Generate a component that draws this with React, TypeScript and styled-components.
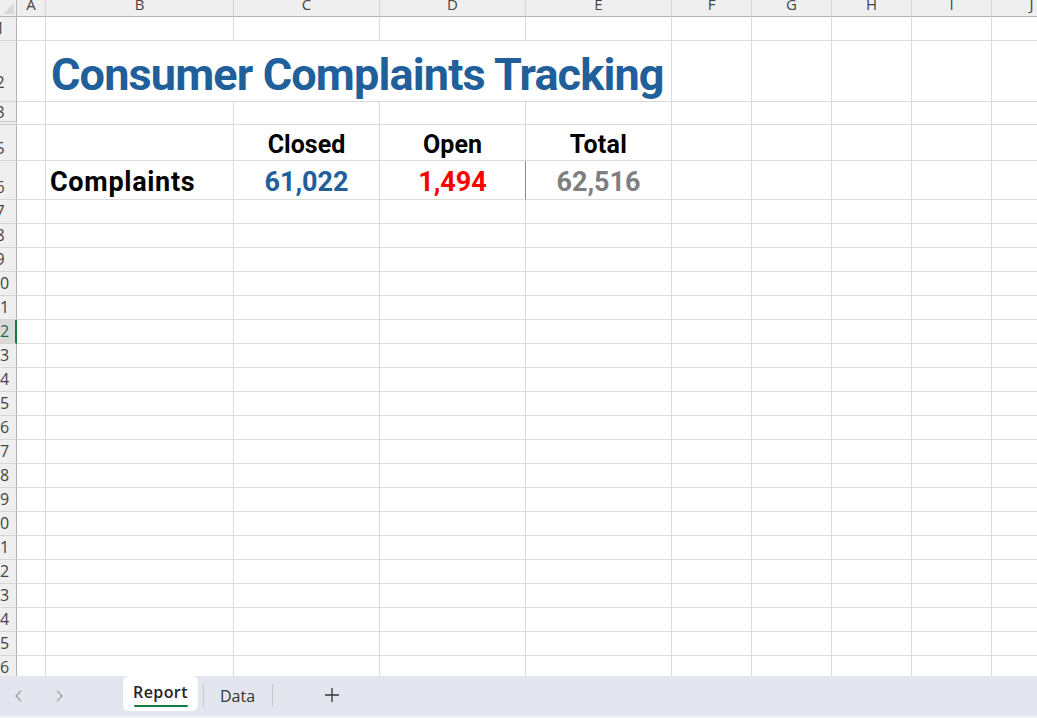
import React from "react";
import styled, { createGlobalStyle, css } from "styled-components";

const GlobalStyle = createGlobalStyle`
  html, body { margin: 0; padding: 0; background: #ffffff; overflow: hidden; }
  body { width: 1037px; height: 718px; font-family: "Open Sans", "Noto Sans", sans-serif; }
  #root { width: 100%; height: 100%; }
  * { box-sizing: border-box; }
`;

type Col = { key: string; w: number };
const COLS: Col[] = [
  { key: "A", w: 29 },
  { key: "B", w: 188 },
  { key: "C", w: 146 },
  { key: "D", w: 146 },
  { key: "E", w: 146 },
  { key: "F", w: 80 },
  { key: "G", w: 80 },
  { key: "H", w: 80 },
  { key: "I", w: 80 },
  { key: "J", w: 80 },
];

type CellDef = {
  text: string;
  color: string;
  size: number;
  align: "left" | "center";
  span?: number;
  pl?: number;
  pb?: number;
  spacing?: number;
};

type RowDef = {
  n: number;
  h: number;
  cells?: Record<string, CellDef>;
  darkRight?: string;
  hiddenAfter?: boolean;
  labelLift?: number;
};

const BLUE = "#215f9a";

const ROWS: RowDef[] = [
  { n: 1, h: 24 },
  {
    n: 2,
    h: 61,
    labelLift: 7,
    cells: {
      B: {
        text: "Consumer Complaints Tracking",
        color: BLUE,
        size: 45,
        align: "left",
        span: 4,
        pl: 5,
        pb: 0,
        spacing: -0.85,
      },
    },
  },
  { n: 3, h: 23, hiddenAfter: true, labelLift: -3 },
  {
    n: 5,
    h: 36,
    cells: {
      C: { text: "Closed", color: "#000000", size: 25, align: "center" },
      D: { text: "Open", color: "#000000", size: 25, align: "center" },
      E: { text: "Total", color: "#000000", size: 25, align: "center", spacing: 0.3 },
    },
  },
  {
    n: 6,
    h: 39,
    darkRight: "D",
    cells: {
      B: { text: "Complaints", color: "#000000", size: 27, align: "left", spacing: 0.7 },
      C: { text: "61,022", color: BLUE, size: 27, align: "center" },
      D: { text: "1,494", color: "#ff0000", size: 27, align: "center" },
      E: { text: "62,516", color: "#7f7f7f", size: 27, align: "center" },
    },
  },
  { n: 7, h: 24 },
  ...Array.from({ length: 19 }, (_, i) => ({ n: 8 + i, h: 24 })),
];

const SELECTED_ROW = 12;

const Page = styled.div`
  width: 100%;
  height: 100%;
  display: flex;
  flex-direction: column;
`;

const Sheet = styled.div<{ $cols: string; $rows: string }>`
  flex: 1 1 auto;
  min-height: 0;
  overflow: hidden;
  display: grid;
  grid-template-columns: ${(p) => p.$cols};
  grid-template-rows: ${(p) => p.$rows};
  align-content: start;
  justify-content: start;
  background: #ffffff;
`;

const Corner = styled.div`
  background: #efefef;
  border-right: 1px solid #b4b4b4;
  border-bottom: 1px solid #b4b4b4;
  display: flex;
  align-items: flex-end;
  justify-content: flex-end;
  padding: 0 2px 2px 0;
`;

const ColHead = styled.div`
  background: #efefef;
  border-right: 1px solid #d6d6d6;
  border-bottom: 1px solid #b4b4b4;
  display: flex;
  justify-content: center;
  align-items: flex-start;
  overflow: hidden;
  font-family: "Open Sans", sans-serif;
  font-size: 15px;
  font-weight: 400;
  color: #444444;
`;

const ColLabel = styled.span`
  line-height: 15px;
  margin-top: -3px;
`;

const RowHead = styled.div<{ $selected?: boolean; $hiddenAfter?: boolean }>`
  background: ${(p) => (p.$selected ? "#dadada" : "#efefef")};
  border-right: ${(p) => (p.$selected ? "2px solid #107c41" : "1px solid #b4b4b4")};
  border-bottom: ${(p) => (p.$hiddenAfter ? "4px double #c8c8c8" : "1px solid #d6d6d6")};
  display: flex;
  align-items: flex-end;
  justify-content: flex-start;
  overflow: hidden;
  padding-bottom: 2px;
  font-family: "Open Sans", sans-serif;
  font-size: 16px;
  color: ${(p) => (p.$selected ? "#1d6a3f" : "#444444")};
`;

const RowLabel = styled.span<{ $lift?: number }>`
  flex: none;
  width: 40px;
  margin-left: -20px;
  margin-bottom: ${(p) => p.$lift ?? 0}px;
  text-align: center;
  line-height: 20px;
`;

const Cell = styled.div<{
  $align: "left" | "center";
  $darkRight?: boolean;
  $span?: number;
  $pl?: number;
  $pb?: number;
}>`
  min-width: 0;
  border-right: 1px solid ${(p) => (p.$darkRight ? "#8c8c8c" : "#dadada")};
  border-bottom: 1px solid #dadada;
  display: flex;
  align-items: flex-end;
  justify-content: ${(p) => (p.$align === "center" ? "center" : "flex-start")};
  padding: 0 ${(p) => p.$pl ?? 4}px ${(p) => p.$pb ?? 1}px ${(p) => p.$pl ?? 4}px;
  white-space: nowrap;
  ${(p) =>
    p.$span &&
    css`
      grid-column: span ${p.$span};
    `}
`;

const CellText = styled.span<{ $size: number; $color: string; $spacing?: number }>`
  font-family: Roboto, "Liberation Sans", sans-serif;
  font-weight: 700;
  font-size: ${(p) => p.$size}px;
  line-height: normal;
  color: ${(p) => p.$color};
  letter-spacing: ${(p) => p.$spacing ?? 0}px;
`;

const TabBar = styled.div`
  flex: none;
  height: 42px;
  background: #e3e6ee;
  border-bottom: 2px solid #f3f3f3;
  display: flex;
  align-items: flex-start;
  font-family: "Open Sans", "Noto Sans", sans-serif;
`;

const NavGroup = styled.div`
  width: 123px;
  display: flex;
  gap: 34px;
  padding: 14px 0 0 15px;
`;

const NavButton = styled.div`
  width: 7px;
  height: 12px;
  display: flex;
`;

const Tab = styled.div<{ $active?: boolean }>`
  height: 35px;
  padding-top: ${(p) => (p.$active ? "6px" : "10px")};
  width: ${(p) => (p.$active ? "75px" : "auto")};
  display: flex;
  flex-direction: column;
  align-items: center;
  background: ${(p) => (p.$active ? "#ffffff" : "transparent")};
  border-radius: 6px;
`;

const TabLabel = styled.span<{ $active?: boolean }>`
  font-size: 16px;
  line-height: 20px;
  font-weight: ${(p) => (p.$active ? 600 : 400)};
  color: ${(p) => (p.$active ? "#242424" : "#333333")};
  letter-spacing: ${(p) => (p.$active ? "0.4px" : "0")};
`;

const TabUnderline = styled.div`
  margin-top: 3px;
  width: 54px;
  height: 2px;
  border-radius: 1px;
  background: #107c41;
`;

const Separator = styled.div<{ $ml: number; $mr: number }>`
  width: 1px;
  height: 23px;
  margin: 8px ${(p) => p.$mr}px 0 ${(p) => p.$ml}px;
  background: #c6c8cc;
`;

const AddButton = styled.div`
  margin: 11px 0 0 51px;
  width: 16px;
  height: 16px;
  display: flex;
`;

function Chevron({ dir }: { dir: "left" | "right" }) {
  const pts = dir === "left" ? "6,0.8 1,6 6,11.2" : "1,0.8 6,6 1,11.2";
  return (
    <svg width="7" height="12" viewBox="0 0 7 12">
      <polyline points={pts} fill="none" stroke="#9a9a9a" strokeWidth="1.2" />
    </svg>
  );
}

export default function App() {
  const colTemplate = ["17px", ...COLS.map((c) => `${c.w}px`)].join(" ");
  const rowTemplate = ["17px", ...ROWS.map((r) => `${r.h}px`)].join(" ");

  return (
    <>
      <GlobalStyle />
      <Page>
        <Sheet $cols={colTemplate} $rows={rowTemplate}>
          <Corner>
            <svg width="11" height="11" viewBox="0 0 11 11">
              <polygon points="11,0 11,11 0,11" fill="#d8d8d8" />
            </svg>
          </Corner>
          {COLS.map((c) => (
            <ColHead key={c.key}>
              <ColLabel>{c.key}</ColLabel>
            </ColHead>
          ))}
          {ROWS.map((r) => {
            const out: React.ReactNode[] = [];
            out.push(
              <RowHead
                key={`h${r.n}`}
                $selected={r.n === SELECTED_ROW}
                $hiddenAfter={r.hiddenAfter}
              >
                <RowLabel $lift={r.labelLift}>{r.n}</RowLabel>
              </RowHead>
            );
            let skip = 0;
            COLS.forEach((c) => {
              if (skip > 0) {
                skip -= 1;
                return;
              }
              const def = r.cells?.[c.key];
              if (def?.span) skip = def.span - 1;
              out.push(
                <Cell
                  key={`${r.n}${c.key}`}
                  $align={def?.align ?? "left"}
                  $darkRight={r.darkRight === c.key}
                  $span={def?.span}
                  $pl={def?.pl}
                  $pb={def?.pb}
                >
                  {def && (
                    <CellText $size={def.size} $color={def.color} $spacing={def.spacing}>
                      {def.text}
                    </CellText>
                  )}
                </Cell>
              );
            });
            return out;
          })}
        </Sheet>
        <TabBar>
          <NavGroup>
            <NavButton>
              <Chevron dir="left" />
            </NavButton>
            <NavButton>
              <Chevron dir="right" />
            </NavButton>
          </NavGroup>
          <Tab $active>
            <TabLabel $active>Report</TabLabel>
            <TabUnderline />
          </Tab>
          <Separator $ml={5} $mr={16} />
          <Tab>
            <TabLabel>Data</TabLabel>
          </Tab>
          <Separator $ml={17} $mr={0} />
          <AddButton>
            <svg width="16" height="16" viewBox="0 0 16 16">
              <path d="M8 1v14M1 8h14" stroke="#333333" strokeWidth="1.3" fill="none" />
            </svg>
          </AddButton>
        </TabBar>
      </Page>
    </>
  );
}
